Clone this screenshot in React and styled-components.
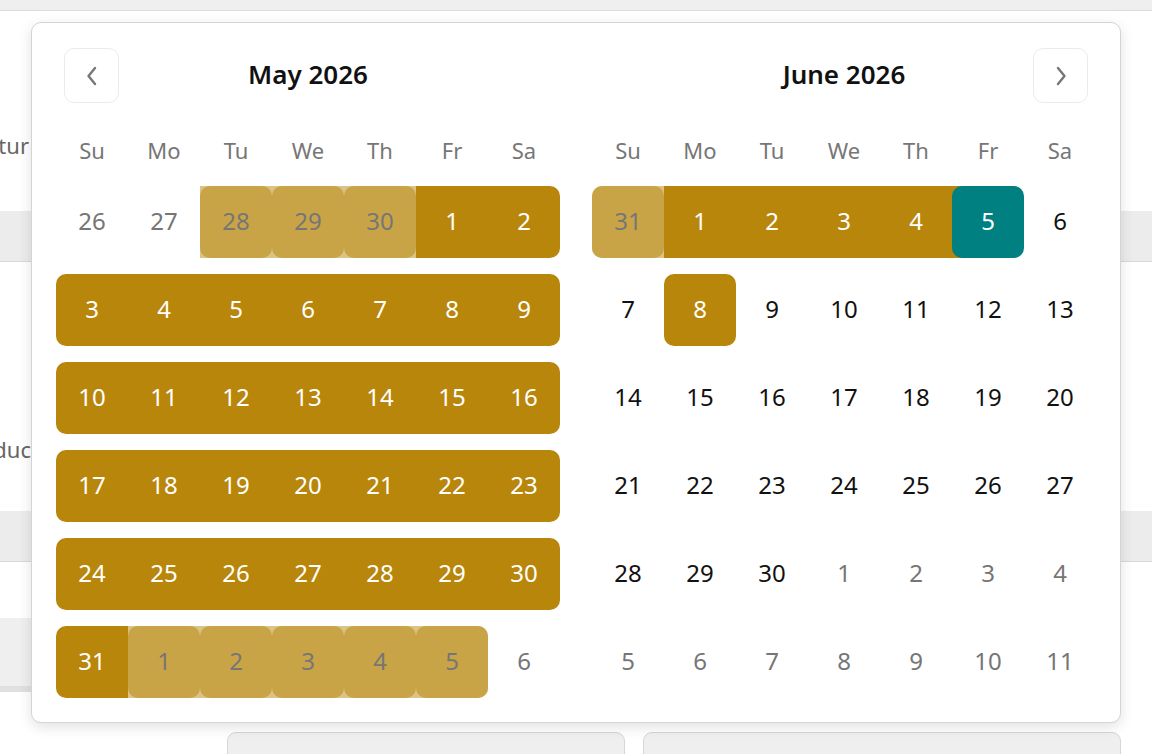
import React from "react";
import styled, { createGlobalStyle } from "styled-components";

const GlobalStyle = createGlobalStyle`
  html, body { margin: 0; padding: 0; background: #ffffff; }
  body {
    font-family: "Noto Sans", "Open Sans", "Liberation Sans", sans-serif;
    overflow: hidden;
  }
  * { box-sizing: border-box; }
`;

const GOLD = "#b8860b";
const GOLD_LIGHT_BG = "#dbc285";
const GOLD_LIGHT = "#c9a447";
const TEAL = "#008080";

/* ---------- background page ---------- */

const Page = styled.div`
  position: relative;
  width: 1152px;
  height: 754px;
  overflow: hidden;
  background: #fff;
`;

const TopBar = styled.div`
  height: 11px;
  background: #efefef;
  border-bottom: 1px solid #dcdcdc;
`;

const Block = styled.div`
  height: ${(p) => p.$h}px;
  padding-top: ${(p) => p.$pt || 0}px;
`;

const LabelClip = styled.div`
  width: ${(p) => p.$w}px;
  overflow: hidden;
  direction: rtl;
  white-space: nowrap;
  font-size: 22px;
  line-height: 30px;
  color: #666;
`;

const Band = styled.div`
  height: 51px;
  background: #ececec;
  border-bottom: 1px solid #d9d9d9;
`;

const GrayBox = styled.div`
  width: 420px;
  height: 74px;
  background: #efefef;
  border-bottom: 6px solid #e0e0e0;
`;

const BottomRow = styled.div`
  display: flex;
  gap: 18px;
  padding-left: 227px;
`;

const BottomBox = styled.div`
  width: ${(p) => p.$w}px;
  height: 40px;
  background: #efefef;
  border: 1px solid #d6d6d6;
  border-radius: 9px 9px 0 0;
`;

/* ---------- popover calendar ---------- */

const Popover = styled.div`
  position: absolute;
  left: 31px;
  top: 22px;
  width: 1090px;
  height: 701px;
  background: #fff;
  border: 1px solid #d4d4d4;
  border-radius: 10px;
  box-shadow: 0 4px 14px rgba(0, 0, 0, 0.12);
  padding: 24px;
  display: flex;
  gap: 32px;
`;

const Month = styled.div`
  width: 504px;
  display: flex;
  flex-direction: column;
`;

const Caption = styled.div`
  display: grid;
  grid-template-columns: 55px 1fr 55px;
  align-items: center;
  height: 56px;
  padding: 0 8px;
`;

const Title = styled.div`
  grid-column: 2;
  text-align: center;
  font-size: 26px;
  font-weight: 600;
  color: #111;
  line-height: 1;
  padding-bottom: 2px;
`;

const NavButton = styled.button`
  grid-column: ${(p) => p.$col};
  width: 55px;
  height: 55px;
  margin-top: 1px;
  border: 1px solid #ebebeb;
  border-radius: 10px;
  background: #fff;
  display: flex;
  align-items: center;
  justify-content: center;
  padding: 0;
  cursor: pointer;
`;

const WeekRow = styled.div`
  display: grid;
  grid-template-columns: repeat(7, 72px);
  height: 39px;
  margin-top: 28px;
  align-items: center;
`;

const WeekDay = styled.div`
  text-align: center;
  font-size: 22px;
  line-height: 1;
  padding-bottom: 2px;
  color: #767676;
`;

const Grid = styled.div`
  display: grid;
  grid-template-columns: repeat(7, 72px);
  grid-auto-rows: 72px;
  row-gap: 16px;
  margin-top: 16px;
`;

const cellBg = (t) => {
  if (t === "r") return GOLD;
  if (t === "or") return GOLD_LIGHT_BG;
  if (t === "end") return `linear-gradient(to right, ${GOLD} 50%, transparent 50%)`;
  return "transparent";
};

const Cell = styled.div`
  display: flex;
  background: ${(p) => cellBg(p.$t)};
  border-top-left-radius: ${(p) => (p.$rl ? "10px" : "0")};
  border-bottom-left-radius: ${(p) => (p.$rl ? "10px" : "0")};
  border-top-right-radius: ${(p) => (p.$rr ? "10px" : "0")};
  border-bottom-right-radius: ${(p) => (p.$rr ? "10px" : "0")};
`;

const btnBg = (t) => {
  if (t === "or") return GOLD_LIGHT;
  if (t === "end") return TEAL;
  if (t === "single") return GOLD;
  return "transparent";
};

const btnColor = (t) => {
  if (t === "r" || t === "end" || t === "single") return "#fff";
  if (t === "o" || t === "or") return "#767676";
  return "#111";
};

const DayButton = styled.div`
  flex: 1;
  display: flex;
  align-items: center;
  justify-content: center;
  border-radius: 10px;
  background: ${(p) => btnBg(p.$t)};
  color: ${(p) => btnColor(p.$t)};
  font-size: 24px;
  line-height: 1;
  padding-bottom: 2px;
`;

const Chevron = ({ dir }) => (
  <svg width="12" height="20" viewBox="0 0 12 20" fill="none">
    <path
      d={dir === "left" ? "M9 2 L2.5 10 L9 18" : "M3 2 L9.5 10 L3 18"}
      stroke="#777"
      strokeWidth="2.4"
      strokeLinecap="round"
      strokeLinejoin="round"
    />
  </svg>
);

const WEEKDAYS = ["Su", "Mo", "Tu", "We", "Th", "Fr", "Sa"];

// day: [label, type, roundLeft, roundRight]
const range = (from, to, t) => {
  const a = [];
  for (let i = from; i <= to; i++) a.push([i, t]);
  return a;
};

const rangeRow = (from) =>
  range(from, from + 6, "r").map((d, i) => [d[0], "r", i === 0, i === 6]);

const MAY = [
  [26, "o"], [27, "o"], [28, "or"], [29, "or"], [30, "or"], [1, "r"], [2, "r", false, true],
  ...rangeRow(3),
  ...rangeRow(10),
  ...rangeRow(17),
  ...rangeRow(24),
  [31, "r", true, false], [1, "or"], [2, "or"], [3, "or"], [4, "or"], [5, "or", false, true], [6, "o"],
];

const JUNE = [
  [31, "or", true, false], [1, "r"], [2, "r"], [3, "r"], [4, "r"], [5, "end"], [6, "n"],
  [7, "n"], [8, "single"], ...range(9, 13, "n"),
  ...range(14, 20, "n"),
  ...range(21, 27, "n"),
  ...range(28, 30, "n"), ...range(1, 4, "o"),
  ...range(5, 11, "o"),
];

const MonthView = ({ title, days, nav }) => (
  <Month>
    <Caption>
      {nav === "left" && (
        <NavButton $col={1} aria-label="Previous month">
          <Chevron dir="left" />
        </NavButton>
      )}
      <Title>{title}</Title>
      {nav === "right" && (
        <NavButton $col={3} aria-label="Next month">
          <Chevron dir="right" />
        </NavButton>
      )}
    </Caption>
    <WeekRow>
      {WEEKDAYS.map((w) => (
        <WeekDay key={w}>{w}</WeekDay>
      ))}
    </WeekRow>
    <Grid>
      {days.map(([n, t, rl, rr], i) => (
        <Cell key={i} $t={t} $rl={rl} $rr={rr}>
          <DayButton $t={t}>{n}</DayButton>
        </Cell>
      ))}
    </Grid>
  </Month>
);

export default function App() {
  return (
    <>
      <GlobalStyle />
      <Page>
        <TopBar />
        <Block $h={200} $pt={119}>
          <LabelClip $w={29}>Signatur</LabelClip>
        </Block>
        <Band />
        <Block $h={249} $pt={172}>
          <LabelClip $w={31}>Produc</LabelClip>
        </Block>
        <Band />
        <Block $h={56} />
        <GrayBox />
        <Block $h={40} />
        <BottomRow>
          <BottomBox $w={398} />
          <BottomBox $w={478} />
        </BottomRow>

        <Popover>
          <MonthView title="May 2026" days={MAY} nav="left" />
          <MonthView title="June 2026" days={JUNE} nav="right" />
        </Popover>
      </Page>
    </>
  );
}
